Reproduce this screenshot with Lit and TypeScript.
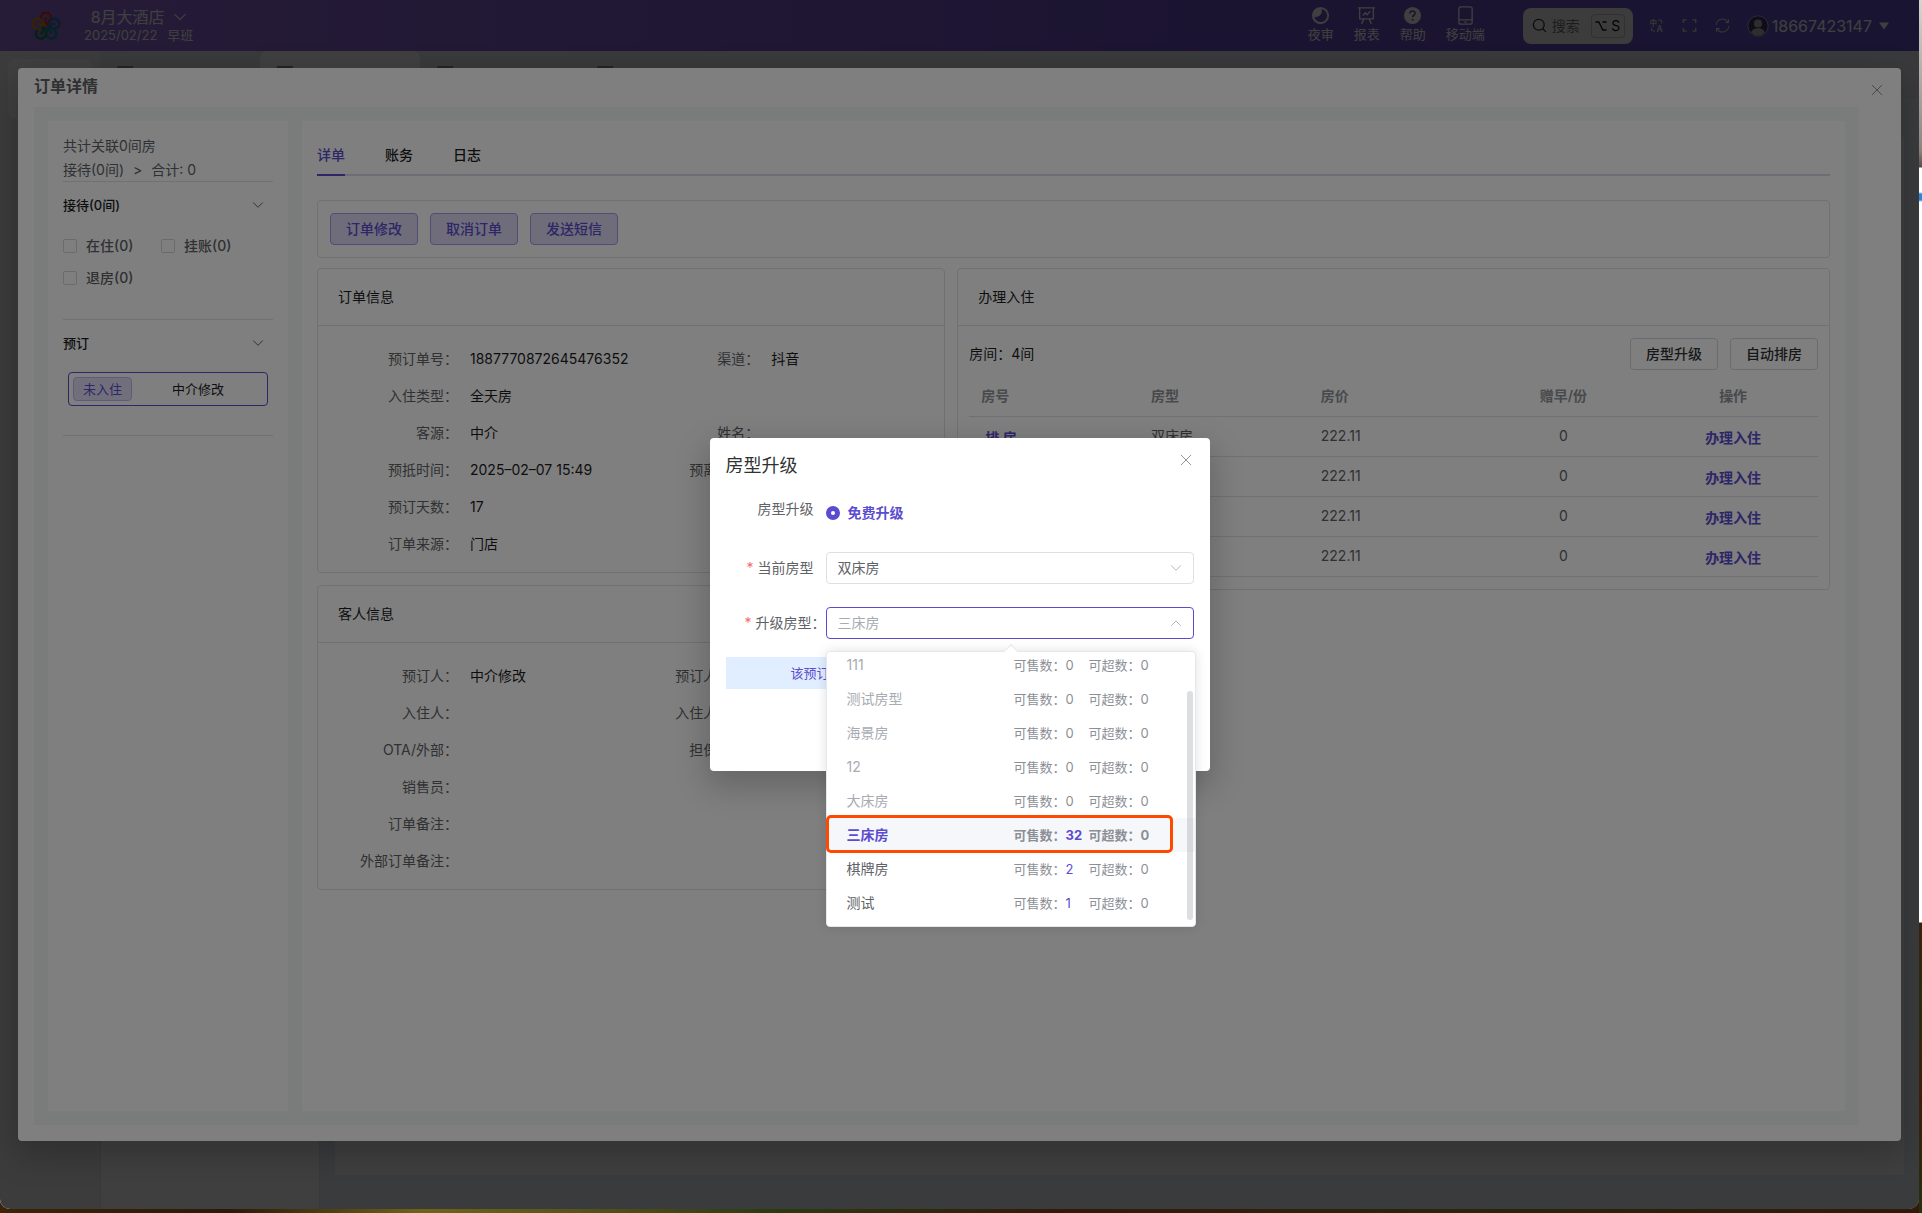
import { LitElement, html, css, svg, nothing } from "lit";
import { customElement, state } from "lit/decorators.js";
import { classMap } from "lit/directives/class-map.js";

interface Field {
  label: string;
  value?: string;
}

interface RoomType {
  name: string;
  sale: number;
  over: number;
}

const ORDER_ROWS: [Field, Field?][] = [
  [{ label: "预订单号：", value: "1887770872645476352" }, { label: "渠道：", value: "抖音" }],
  [{ label: "入住类型：", value: "全天房" }],
  [{ label: "客源：", value: "中介" }, { label: "姓名：" }],
  [{ label: "预抵时间：", value: "2025–02–07 15:49" }, { label: "预离时间：" }],
  [{ label: "预订天数：", value: "17" }],
  [{ label: "订单来源：", value: "门店" }],
];

const GUEST_ROWS: [Field, Field?][] = [
  [{ label: "预订人：", value: "中介修改" }, { label: "预订人手机：" }],
  [{ label: "入住人：" }, { label: "入住人手机：" }],
  [{ label: "OTA/外部：" }, { label: "担保类型：" }],
  [{ label: "销售员：" }],
  [{ label: "订单备注：" }],
  [{ label: "外部订单备注：" }],
];

const ROOM_TYPES: RoomType[] = [
  { name: "111", sale: 0, over: 0 },
  { name: "测试房型", sale: 0, over: 0 },
  { name: "海景房", sale: 0, over: 0 },
  { name: "12", sale: 0, over: 0 },
  { name: "大床房", sale: 0, over: 0 },
  { name: "三床房", sale: 32, over: 0 },
  { name: "棋牌房", sale: 2, over: 0 },
  { name: "测试", sale: 1, over: 0 },
];

const chevron = (cls: string, up = false) => html`
  <svg class=${cls} viewBox="0 0 12 12" fill="none" stroke="currentColor" stroke-linecap="round" stroke-linejoin="round">
    ${up ? svg`<path d="M1.5 8.5 6 4l4.5 4.5" />` : svg`<path d="M1.5 3.8 6 8.3l4.5-4.5" />`}
  </svg>
`;

const closeIcon = html`
  <svg class="icon-close" viewBox="0 0 12 12" fill="none" stroke="currentColor" stroke-linecap="round">
    <path d="M1.2 1.2l9.6 9.6M10.8 1.2l-9.6 9.6" />
  </svg>
`;

const moonIcon = html`
  <svg class="icon-nav" viewBox="0 0 20 20" fill="currentColor">
    <circle cx="10" cy="10" r="9" />
    <path fill="var(--nav-bg)" d="M11 3.2c1.600 4.600-2.200 9.200-7.600 8.200A6.900 6.900 0 1 0 11 3.200Z" />
  </svg>
`;

const chartIcon = html`
  <svg class="icon-nav" viewBox="0 0 20 20" fill="none" stroke="currentColor" stroke-width="1.4">
    <path d="M1 2h18M2.8 2v11.6h14.4V2M7.2 13.8l-2.4 5M12.8 13.8l2.4 5M6.2 10.2l2.4-3 2 2L14 5.4" />
  </svg>
`;

const helpIcon = html`
  <svg class="icon-nav" viewBox="0 0 20 20" fill="currentColor">
    <circle cx="10" cy="10" r="9" />
    <path d="M7.3 8c0-3.6 5.5-3.5 5.5-.3 0 2-2.7 2.1-2.7 4.2" fill="none" stroke="var(--nav-bg)" stroke-width="1.7" />
    <circle cx="10.1" cy="14.4" r="1.1" fill="var(--nav-bg)" />
  </svg>
`;

const phoneIcon = html`
  <svg class="icon-nav" viewBox="0 0 20 20" fill="none" stroke="currentColor" stroke-width="1.4">
    <rect x="3" y="1" width="14" height="18" rx="2" />
    <path d="M3 14.600h14M8.800 17h2.400" />
  </svg>
`;

const searchIcon = html`
  <svg class="icon-search" viewBox="0 0 16 16" fill="none" stroke="currentColor" stroke-width="1.4" stroke-linecap="round">
    <circle cx="7.2" cy="7.2" r="5.8" />
    <path d="M11.5 11.5l3 3" />
  </svg>
`;

const translateIcon = html`
  <svg class="icon-tool" viewBox="0 0 16 16" fill="none" stroke="currentColor" stroke-width="1.2">
    <text class="glyph-cn" x="0.4" y="8">中</text>
    <text class="glyph-en" x="8" y="15.2">A</text>
    <path d="M10 2.2h1.6q2 0 2 2v1.6M2.6 10.4v1.4q0 2 2 2h1.8" />
  </svg>
`;

const fullscreenIcon = html`
  <svg class="icon-tool" viewBox="0 0 16 16" fill="none" stroke="currentColor" stroke-width="1.5">
    <path d="M1.4 5.4v-3.4h3.4M11.2 2h3.4v3.4M14.6 10.6v3.4h-3.4M4.8 14h-3.4v-3.4" />
  </svg>
`;

const refreshIcon = html`
  <svg class="icon-tool" viewBox="0 0 16 16" fill="none" stroke="currentColor" stroke-width="1.1">
    <path d="M1.2 7.4A6.8 6.8 0 0 1 13.8 4.4M14.8 8.6A6.8 6.8 0 0 1 2.2 11.6M14.4 1.4v3.4h-3.4M1.6 14.6v-3.4H5" />
  </svg>
`;

const avatarIcon = html`
  <svg class="icon-avatar" viewBox="0 0 22 22">
    <circle cx="11" cy="11" r="10.2" fill="#3c3670" stroke="#b4b4b4" stroke-width="1" />
    <circle cx="11" cy="8.4" r="4" fill="#b8b8b8" />
    <path d="M4.2 17.6c1-3.4 3.4-4.4 6.8-4.4s5.8 1 6.8 4.4a9.2 9.2 0 0 1-13.6 0Z" fill="#b8b8b8" />
  </svg>
`;

const PETALS = [
  { color: "#e0321e", turn: 0 },
  { color: "#2f70a8", turn: 72 },
  { color: "#128c98", turn: 144 },
  { color: "#0f8a4a", turn: 216 },
  { color: "#d0862a", turn: 288 },
];

const logo = html`
  <svg class="logo" viewBox="0 0 32 32" fill="none" stroke-width="2.4" stroke-linecap="round">
    ${PETALS.map(
      (p) => svg`<path
        transform="rotate(${p.turn} 16 16.5)"
        stroke=${p.color}
        d="M12.4 12C9.6 8.6 11 2.8 15.8 2.6c4.8 0 6.6 5 3.8 8.600L17 14.200c-1.400-2-2.600-4.200-1-6.200" />`
    )}
  </svg>
`;

@customElement("app-root")
export class AppRoot extends LitElement {
  @state() private picked = "三床房";

  static styles = css`
    :host {
      --primary: #5b4ccf;
      --nav-bg: #6c50c6;
      --line: #e2e3ea;
      --text: #606266;
      --ink: #1c1c1e;
      display: block;
      box-sizing: border-box;
      min-height: 100vh;
      padding: 0 3px 4px 0;
      background:
        linear-gradient(#d8d4d0 0, #8d8480 150px, #5a4a44 167px, #ffffff 168px, #ffffff 192px, #2f86d8 194px, #2f86d8 200px, #ffffff 202px, #ffffff 922px, #3a2010 923px, #2c2a10 1000px, #3a1e0c 1100px, #24300f 100%) right / 3px 100% no-repeat,
        linear-gradient(90deg, #3c2408, #2a1a08 12%, #6e6418 22%, #59521a 30%, #2c3a10 40%, #33190a 55%, #2c240c 75%, #301a0a);
      font: 14px/20px Inter, "Noto Sans CJK SC", sans-serif;
      color: var(--text);
    }
    *, *::before, *::after { box-sizing: border-box; }
    button, select, input { font: inherit; color: inherit; margin: 0; }
    button { padding: 0; border: 0; background: none; cursor: pointer; white-space: nowrap; }
    h1, h2, h3, p { margin: 0; padding: 0; font: inherit; }
    svg { display: block; flex: none; }

    .window {
      position: relative;
      display: flex;
      flex-direction: column;
      min-height: calc(100vh - 4px);
      overflow: hidden;
      border-radius: 0 0 10px 10px;
      background: #ebeef4;
    }

    /* top bar */
    .topbar {
      display: flex;
      align-items: center;
      height: 51px;
      padding: 0 30px;
      background: linear-gradient(90deg, #9a70e0, #6c50c6 65%, #6450c4);
      color: #ffffff;
    }
    .logo { width: 32px; height: 32px; }
    .hotel { display: flex; flex-direction: column; align-items: center; margin-left: 22px; }
    .hotel-name { display: flex; align-items: center; gap: 8px; font-size: 16px; line-height: 18px; }
    .hotel-date { display: flex; gap: 10px; font-size: 13px; line-height: 18px; }
    .chev-lg { width: 14px; height: 14px; }
    .nav { display: flex; gap: 20px; margin-left: auto; padding-bottom: 2px; }
    .nav-item { display: flex; flex-direction: column; align-items: center; font-size: 13px; line-height: 18px; }
    .icon-nav { width: 19px; height: 19px; }
    .search {
      display: flex; align-items: center; height: 36px; padding: 0 8px 0 9px; margin-left: 38px;
      border-radius: 8px; background: #f0f0f0; color: #333333;
    }
    .icon-search { width: 15px; height: 15px; }
    .search-text { margin: 0 11px 0 5px; color: #777777; }
    .keys { display: flex; align-items: center; justify-content: center; gap: 4px; width: 34px; height: 24px; border: 1px solid #c4c4c4; border-radius: 4px; color: #111111; }
    .icon-opt { width: 12px; height: 12px; }
    .tools { display: flex; align-items: center; gap: 18px; margin-left: 16px; color: #d8d8d8; }
    .icon-tool { width: 15px; height: 15px; }
    .glyph-cn { font-size: 8px; font-weight: 700; fill: currentColor; stroke: none; }
    .glyph-en { font-size: 9px; font-weight: 700; fill: currentColor; stroke: none; }
    .user { display: flex; align-items: center; gap: 3px; margin-left: 17px; font-size: 16px; }
    .icon-avatar { width: 22px; height: 22px; }
    .caret { width: 10px; height: 8px; margin-left: 4px; }

    /* page behind the drawer */
    .page { flex: 1; display: flex; }
    .page-side { width: 100px; padding: 8px; background: #f0f1f2; }
    .page-side-card { height: 60px; border-radius: 8px; background: #ffffff; }
    .page-main { flex: 1; display: flex; flex-direction: column; }
    .page-tabs { display: flex; height: 47px; border-bottom: 1px solid #e4e6ec; background: #e6e8ee; }
    .page-tab { width: 160px; padding: 15px 17px; border-radius: 8px 8px 0 0; }
    .page-tab.on { background: #ffffff; }
    .page-tab-mark { width: 16px; height: 14px; border: 2px solid #8c8f96; }
    .page-body { flex: 1; display: flex; gap: 15px; padding-right: 15px; margin-top: 39px; }
    .page-list { width: 220px; border: 1px solid #e4e6ec; border-width: 0 1px; background: #ffffff; }
    .page-panel { flex: 1; margin-bottom: 34px; background: #ffffff; }

    /* overlays */
    .mask { position: absolute; inset: 0; display: flex; background: rgba(0, 0, 0, 0.5); }
    .mask-drawer { padding: 68px 18px; }
    .mask-dialog { align-items: center; justify-content: center; }

    .drawer {
      flex: 1; display: flex; flex-direction: column; padding: 0 0 16px;
      border-radius: 4px; background: #ffffff;
      box-shadow: 0 12px 32px 4px rgba(0, 0, 0, 0.2);
    }
    .drawer-head { display: flex; align-items: flex-start; justify-content: space-between; height: 39px; padding: 8px 18px 0 16px; }
    .drawer-head button { padding-top: 8px; }
    .drawer-title { font-size: 16px; font-weight: 600; }
    .icon-close { width: 12px; height: 12px; color: #909399; }
    .drawer-body { flex: 1; display: flex; gap: 14px; margin: 0 42px 0 16px; padding: 14px; background: #f4f8f6; }
    .side { width: 240px; padding: 14px 15px; background: #ffffff; }
    .main { flex: 1; min-width: 0; padding: 15px; background: #ffffff; }

    /* left column */
    .summary { display: grid; gap: 2px; line-height: 22px; border-bottom: 1px solid var(--line); }
    .crumbs { display: flex; gap: 9px; }
    .group { border-bottom: 1px solid var(--line); padding-bottom: 25px; }
    .group-head { display: flex; align-items: center; justify-content: space-between; width: 100%; height: 48px; padding: 0 9px 2px 0; font-size: 13px; font-weight: 500; color: var(--ink); }
    .chev { width: 12px; height: 12px; color: #606266; }
    .checks { display: flex; flex-wrap: wrap; }
    .check { display: flex; align-items: center; gap: 9px; width: 98px; height: 32px; font-weight: 500; }
    .check input { appearance: none; width: 14px; height: 14px; border: 1px solid #d4d6de; border-radius: 2px; background: #ffffff; }
    .booking { display: flex; align-items: center; width: calc(100% - 10px); height: 34px; margin: 4px 5px; padding: 0 4px; border: 1px solid var(--primary); border-radius: 4px; font-size: 13px; color: var(--ink); }
    .booking-tag { padding: 0 9px; border: 1px solid #c0b8f0; border-radius: 4px; background: #e4dffa; line-height: 22px; color: var(--primary); }
    .booking-name { margin-left: 40px; }

    /* right column */
    .tabs { display: flex; gap: 40px; height: 40px; border-bottom: 2px solid #dcdaea; }
    .tab { height: 40px; border-bottom: 2px solid transparent; font-weight: 500; color: var(--ink); }
    .tab.on { border-color: var(--primary); color: var(--primary); }
    .actions { display: flex; gap: 12px; margin: 24px 0 10px; padding: 12px; border: 1px solid var(--line); border-radius: 4px; }
    .btn { height: 32px; padding: 0 15px; border: 1px solid #d4d6de; border-radius: 4px; font-weight: 500; }
    .btn.primary { border-color: #a698ee; background: #dfdaf5; color: var(--primary); }
    .columns { display: grid; grid-template-columns: 72fr 100fr; gap: 12px; align-items: start; }
    .stack { display: grid; gap: 12px; }
    .card { border: 1px solid var(--line); border-radius: 4px; }
    .card-title { height: 57px; padding: 0 20px; border-bottom: 1px solid var(--line); line-height: 56px; color: var(--ink); }
    .fields { padding: 14px 0 10px; }
    .field-row { display: flex; }
    .field { flex: 1; display: flex; gap: 12px; line-height: 37px; }
    .field-label { width: 140px; text-align: right; }
    .field.second .field-label { width: 128px; }
    .field-value { color: var(--ink); }
    .rooms { padding: 12px 11px; }
    .rooms-head { display: flex; align-items: center; gap: 12px; margin-bottom: 6px; color: var(--ink); }
    .rooms-head .btn { color: #303133; }
    .rooms-count { margin-right: auto; }
    .table { width: 100%; table-layout: fixed; border-collapse: collapse; text-align: left; }
    .table th, .table td { height: 40px; padding: 0 12px; border-bottom: 1px solid var(--line); }
    .table th { font-weight: 600; color: #909399; }
    .table .mid { text-align: center; }
    .link { padding-top: 4px; font-weight: 600; color: var(--primary); }
    .link.assign { margin-left: 4px; text-decoration: underline; }

    /* dialog */
    .dialog {
      position: relative; width: 500px; padding: 16px 16px 82px; border-radius: 4px; background: #ffffff;
      box-shadow: 0 12px 32px 4px rgba(0, 0, 0, 0.2);
    }
    .dialog-head { display: flex; align-items: flex-start; justify-content: space-between; padding-right: 2px; }
    .dialog-title { font-size: 18px; line-height: 24px; color: #303133; }
    .form { display: grid; gap: 23px; margin-top: 19px; }
    .form-row { display: flex; align-items: center; height: 32px; }
    .form-label { width: 100px; padding-right: 12px; text-align: right; }
    .form-label.top { align-self: flex-start; line-height: 24px; }
    .form-label.colon { padding-right: 0; }
    .star { margin-right: 4px; color: #f56c6c; }
    .radio { display: flex; align-items: center; gap: 8px; font-weight: 600; color: var(--primary); }
    .radio input { appearance: none; width: 14px; height: 14px; border: 5px solid var(--primary); border-radius: 50%; background: #ffffff; }
    .select { position: relative; flex: 1; }
    .select select { display: block; appearance: none; width: 100%; height: 32px; padding: 0 11px; border: 1px solid #dcdfe6; border-radius: 4px; background: #ffffff; }
    .select.open select { border-color: var(--primary); color: #a8abb2; }
    .select .chev { position: absolute; right: 12px; top: 10px; color: #b4b7be; pointer-events: none; }
    .notice { height: 32px; margin-top: 18px; padding-left: 65px; background: #e1eeff; font-size: 13px; line-height: 32px; color: var(--primary); }

    /* room type list */
    .popper {
      position: absolute; left: 0; top: calc(100% + 12px); width: 370px; z-index: 2;
      border: 1px solid #e4e7ed; border-radius: 4px; background: #ffffff;
      box-shadow: 0 0 12px rgba(0, 0, 0, 0.12);
    }
    .popper::before {
      content: ""; position: absolute; left: 179px; top: -6px; width: 10px; height: 10px;
      border: 1px solid #e4e7ed; border-width: 1px 0 0 1px; background: #ffffff; transform: rotate(45deg);
    }
    .list { position: relative; display: flex; flex-direction: column; justify-content: flex-end; height: 274px; padding-bottom: 6px; overflow: hidden; border-radius: 4px; background: #ffffff; }
    .option { flex: none; display: flex; align-items: center; height: 34px; padding: 0 20px; text-align: left; color: #606266; }
    .option:disabled { color: #a8abb2; cursor: not-allowed; }
    .option.on { background: #f5f7fa; font-weight: 700; color: var(--primary); }
    .option-name { width: 167px; }
    .stock { width: 75px; font-size: 13px; color: #8c8f96; }
    .stock b { font-weight: inherit; }
    .stock b.has { color: var(--primary); }
    .thumb { position: absolute; right: 2px; top: 39px; bottom: 6px; width: 6px; border-radius: 3px; background: rgba(144, 147, 153, 0.3); }
    .marker { position: absolute; left: -1px; right: 22px; bottom: 73px; height: 38px; border: 3px solid #ff4800; border-radius: 5px; pointer-events: none; }
  `;

  private field(f: Field | undefined, second = false) {
    return html`<div class=${classMap({ field: true, second })}>
      ${f ? html`<span class="field-label">${f.label}</span><span class="field-value">${f.value ?? ""}</span>` : nothing}
    </div>`;
  }

  private infoCard(title: string, rows: [Field, Field?][]) {
    return html`<section class="card">
      <h2 class="card-title">${title}</h2>
      <div class="fields">
        ${rows.map(([a, b]) => html`<div class="field-row">${this.field(a)}${this.field(b, true)}</div>`)}
      </div>
    </section>`;
  }

  private topbar() {
    return html`<header class="topbar">
      ${logo}
      <div class="hotel">
        <button class="hotel-name">8月大酒店${chevron("chev-lg")}</button>
        <div class="hotel-date"><span>2025/02/22</span><span>早班</span></div>
      </div>
      <nav class="nav">
        <button class="nav-item">${moonIcon}夜审</button>
        <button class="nav-item">${chartIcon}报表</button>
        <button class="nav-item">${helpIcon}帮助</button>
        <button class="nav-item">${phoneIcon}移动端</button>
      </nav>
      <button class="search">
        ${searchIcon}<span class="search-text">搜索</span>
        <span class="keys">
          <svg class="icon-opt" viewBox="0 0 12 12" fill="none" stroke="currentColor" stroke-width="1.3">
            <path d="M.5 2h3.3l4 8h3.7M7.5 2h4" />
          </svg>
          <span>S</span>
        </span>
      </button>
      <div class="tools">
        <button aria-label="语言">${translateIcon}</button>
        <button aria-label="全屏">${fullscreenIcon}</button>
        <button aria-label="刷新">${refreshIcon}</button>
      </div>
      <button class="user">
        ${avatarIcon}<span>18667423147</span>
        <svg class="caret" viewBox="0 0 10 8" fill="currentColor"><path d="M0 .5h10L5 7.5Z" /></svg>
      </button>
    </header>`;
  }

  private page() {
    return html`<div class="page">
      <div class="page-side"><div class="page-side-card"></div></div>
      <div class="page-main">
        <div class="page-tabs">
          ${[0, 1, 2, 3].map(
            (i) => html`<div class=${classMap({ "page-tab": true, on: i === 1 })}><div class="page-tab-mark"></div></div>`
          )}
        </div>
        <div class="page-body">
          <div class="page-list"></div>
          <div class="page-panel"></div>
        </div>
      </div>
    </div>`;
  }

  private side() {
    return html`<aside class="side">
      <div class="summary">
        <div>共计关联0间房</div>
        <div class="crumbs"><span>接待(0间)</span><span>&gt;</span><span>合计: 0</span></div>
      </div>
      <div class="group">
        <button class="group-head">接待(0间)${chevron("chev")}</button>
        <div class="checks">
          ${["在住(0)", "挂账(0)", "退房(0)"].map((t) => html`<label class="check"><input type="checkbox" />${t}</label>`)}
        </div>
      </div>
      <div class="group">
        <button class="group-head">预订${chevron("chev")}</button>
        <button class="booking"><span class="booking-tag">未入住</span><span class="booking-name">中介修改</span></button>
      </div>
    </aside>`;
  }

  private rooms() {
    return html`<section class="card">
      <h2 class="card-title">办理入住</h2>
      <div class="rooms">
        <div class="rooms-head">
          <span class="rooms-count">房间：4间</span>
          <button class="btn">房型升级</button>
          <button class="btn">自动排房</button>
        </div>
        <table class="table">
          <thead>
            <tr><th>房号</th><th>房型</th><th>房价</th><th class="mid">赠早/份</th><th class="mid">操作</th></tr>
          </thead>
          <tbody>
            ${[0, 1, 2, 3].map(
              () => html`<tr>
                <td><button class="link assign">排 房</button></td>
                <td>双床房</td>
                <td>222.11</td>
                <td class="mid">0</td>
                <td class="mid"><button class="link">办理入住</button></td>
              </tr>`
            )}
          </tbody>
        </table>
      </div>
    </section>`;
  }

  private option(r: RoomType) {
    return html`<button
      class=${classMap({ option: true, on: r.name === this.picked })}
      role="option"
      aria-selected=${r.name === this.picked}
      ?disabled=${r.sale === 0}
      @click=${() => (this.picked = r.name)}
    >
      <span class="option-name">${r.name}</span>
      <span class="stock">可售数：<b class=${classMap({ has: r.sale > 0 })}>${r.sale}</b></span>
      <span class="stock">可超数：<b>${r.over}</b></span>
    </button>`;
  }

  private dialog() {
    return html`<div class="mask mask-dialog">
      <section class="dialog" role="dialog" aria-labelledby="upgrade-title">
        <header class="dialog-head">
          <h3 class="dialog-title" id="upgrade-title">房型升级</h3>
          <button aria-label="关闭">${closeIcon}</button>
        </header>
        <div class="form">
          <div class="form-row">
            <span class="form-label top">房型升级</span>
            <label class="radio"><input type="radio" name="mode" checked />免费升级</label>
          </div>
          <div class="form-row">
            <label class="form-label" for="current"><span class="star">*</span>当前房型</label>
            <div class="select">
              <select id="current"><option>双床房</option></select>
              ${chevron("chev")}
            </div>
          </div>
          <div class="form-row">
            <label class="form-label colon" for="target"><span class="star">*</span>升级房型：</label>
            <div class="select open">
              <select id="target"><option>${this.picked}</option></select>
              ${chevron("chev", true)}
              <div class="popper">
                <div class="list" role="listbox">
                  ${ROOM_TYPES.map((r) => this.option(r))}
                  <div class="thumb"></div>
                </div>
                <div class="marker"></div>
              </div>
            </div>
          </div>
        </div>
        <p class="notice">该预订</p>
      </section>
    </div>`;
  }

  render() {
    return html`<div class="window">
      ${this.topbar()} ${this.page()}
      <div class="mask mask-drawer">
        <section class="drawer">
          <header class="drawer-head">
            <h1 class="drawer-title">订单详情</h1>
            <button aria-label="关闭">${closeIcon}</button>
          </header>
          <div class="drawer-body">
            ${this.side()}
            <main class="main">
              <div class="tabs">
                <button class="tab on">详单</button>
                <button class="tab">账务</button>
                <button class="tab">日志</button>
              </div>
              <div class="actions">
                <button class="btn primary">订单修改</button>
                <button class="btn primary">取消订单</button>
                <button class="btn primary">发送短信</button>
              </div>
              <div class="columns">
                <div class="stack">
                  ${this.infoCard("订单信息", ORDER_ROWS)} ${this.infoCard("客人信息", GUEST_ROWS)}
                </div>
                ${this.rooms()}
              </div>
            </main>
          </div>
        </section>
      </div>
      ${this.dialog()}
    </div>`;
  }
}
